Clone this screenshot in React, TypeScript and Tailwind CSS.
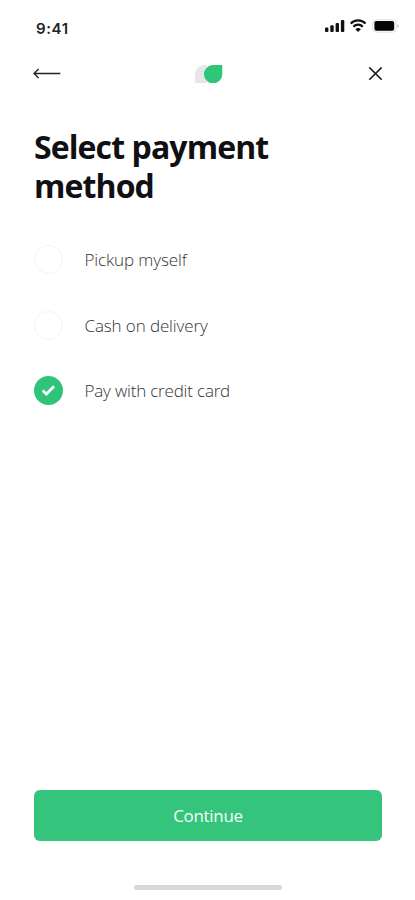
import React, { useState } from 'react';

interface PaymentMethod {
  id: string;
  label: string;
  spacing: string;
}

const METHODS: PaymentMethod[] = [
  { id: 'pickup', label: 'Pickup myself', spacing: 'tracking-[-0.12px]' },
  { id: 'cash', label: 'Cash on delivery', spacing: 'tracking-[-0.12px]' },
  { id: 'card', label: 'Pay with credit card', spacing: 'tracking-[-0.19px]' },
];

const StatusBar: React.FC = () => (
  <div className="h-[52px] pl-9 pr-[15px] pt-[18px] flex items-start justify-between">
    <span className="pt-px font-['Inter',sans-serif] text-[15px] leading-5 font-semibold tracking-[0.6px] text-[#222]">9:41</span>
    <svg width="75" height="16" viewBox="0 0 75 16" fill="none">
      <g fill="#111">
        <rect x="0" y="9.6" width="3.4" height="4.4" rx="1" />
        <rect x="5.3" y="7.2" width="3.4" height="6.8" rx="1" />
        <rect x="10.6" y="5" width="3.4" height="9" rx="1" />
        <rect x="15.9" y="2" width="3.4" height="12" rx="1" />
      </g>
      <path d="M25.7 5.6C29.5 1.2 36.7 1.2 40.5 5.6M28.4 8.8C30.9 6 35.3 6 37.8 8.8" stroke="#111" strokeWidth="2.2" />
      <path d="M33.1 14L30.3 11.2C31.8 9.7 34.4 9.7 35.9 11.2Z" fill="#111" />
      <rect x="47.8" y="1.7" width="23.2" height="12.4" rx="3.4" stroke="#dedede" />
      <rect x="49.4" y="3" width="19.8" height="9.8" rx="2" fill="#050505" />
      <path d="M72.4 6V10C74.2 9.4 74.2 6.6 72.4 6Z" fill="#c4c4c4" />
    </svg>
  </div>
);

const Header: React.FC = () => (
  <header className="h-11 pl-[33px] pr-8 flex items-center justify-between">
    <button aria-label="Back">
      <svg width="28" height="12" viewBox="0 0 28 12" fill="none" stroke="#222" strokeWidth="1.3">
        <path d="M27.3 5.5H1M5.6 1L1 5.5L5.6 10" />
      </svg>
    </button>
    <svg width="28" height="18" viewBox="0 0 28 18" className="-ml-[11px]">
      <path d="M0 18V9A9 9 0 0 1 9 0H12V18Z" fill="#e6e6e9" />
      <circle cx="18" cy="9" r="9.4" fill="#fff" />
      <path d="M18 0H27.3V9A9.2 9.2 0 1 1 18 0Z" fill="#2fc67a" />
    </svg>
    <button aria-label="Close">
      <svg width="15" height="14" viewBox="0 0 15 14" fill="none" stroke="#1c1c1f" strokeWidth="1.6">
        <path d="M1.3 .4L13.7 12.8M13.7 .4L1.3 12.8" />
      </svg>
    </button>
  </header>
);

const App: React.FC = () => {
  const [selected, setSelected] = useState('card');

  return (
    <div className="w-full h-screen bg-white flex flex-col font-['Open_Sans','Noto_Sans',sans-serif]">
      <StatusBar />
      <Header />
      <main className="flex-1 px-[34px] pt-[31px]">
        <h1 className="text-[32px] leading-[39px] font-bold tracking-[-0.9px] text-[#101014]">
          Select payment
          <br />
          method
        </h1>
        <div className="mt-10 flex flex-col gap-[36.5px]">
          {METHODS.map(method => (
            <button
              key={method.id}
              role="radio"
              aria-checked={selected === method.id}
              onClick={() => setSelected(method.id)}
              className="h-[29px] flex items-center text-left"
            >
              {selected === method.id ? (
                <span className="size-[29px] rounded-full bg-[#2fc578] flex items-center justify-center">
                  <svg width="15" height="13" viewBox="0 0 15 13" fill="none" stroke="#fff" strokeWidth="2.7">
                    <path d="M1.7 6.6L5.4 10L13 2.2" />
                  </svg>
                </span>
              ) : (
                <span className="size-[29px] rounded-full border border-[#f3f3f3]" />
              )}
              <span className={`ml-[21.5px] pt-[1.5px] text-[17px] leading-6 font-light text-[#333] ${method.spacing}`}>{method.label}</span>
            </button>
          ))}
        </div>
      </main>
      <footer className="h-[110px] pl-[34px] pr-[33px] flex flex-col items-center">
        <button className="w-full h-[51px] shrink-0 rounded-md bg-[#34c47c] text-[17px] text-[#f2fff8] tracking-[-0.3px]">Continue</button>
        <div className="mt-11 w-[148px] h-[5px] shrink-0 rounded-full bg-[#d8d8da]" />
      </footer>
    </div>
  );
};

export default App;
